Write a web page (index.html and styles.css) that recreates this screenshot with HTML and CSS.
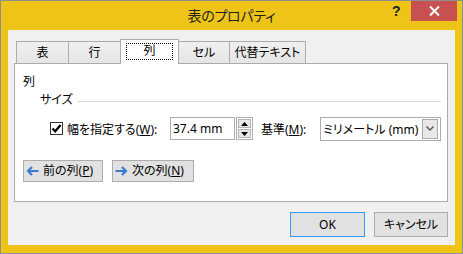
FILE: index.html
```html
<!DOCTYPE html>
<html lang="ja">
<head>
<meta charset="utf-8">
<link rel="stylesheet" href="styles.css">
</head>
<body>
<div class="window">
  <div class="titlebar">
    <div class="title">表のプロパティ</div>
    <div class="help">?</div>
    <div class="close">
      <svg width="11" height="10" viewBox="0 0 11 10"><path d="M1 0.5L10 9.5M10 0.5L1 9.5" stroke="#fff" stroke-width="2"/></svg>
    </div>
  </div>
  <div class="client">
    <div class="tabs">
      <div class="tab t1">表</div>
      <div class="tab t2">行</div>
      <div class="tab sel"><span class="focus">列</span></div>
      <div class="tab t4">セル</div>
      <div class="tab t5">代替テキスト</div>
    </div>
    <div class="panel">
      <div class="group-label">列</div>
      <div class="section"><span>サイズ</span><span class="rule"></span></div>
      <div class="row">
        <span class="check"><svg width="11" height="11" viewBox="0 0 11 11"><path d="M1.5 5.5L4.2 8.3L9.6 2" fill="none" stroke="#000" stroke-width="2.2"/></svg></span>
        <span class="lbl-width">幅を指定する(<u>W</u>):</span>
        <span class="input">37.4 mm</span>
        <span class="spin">
          <span class="spin-btn"><svg width="7" height="4" viewBox="0 0 7 4"><path d="M0 4L3.5 0L7 4Z" fill="#000"/></svg></span>
          <span class="spin-btn"><svg width="7" height="4" viewBox="0 0 7 4"><path d="M0 0L3.5 4L7 0Z" fill="#000"/></svg></span>
        </span>
        <span class="lbl-base">基準(<u>M</u>):</span>
        <span class="select">
          <span class="select-text">ミリメートル (mm)</span>
          <span class="drop"><svg width="8" height="5" viewBox="0 0 8 5"><path d="M0.5 0.5L4 4L7.5 0.5" fill="none" stroke="#555" stroke-width="1.4"/></svg></span>
        </span>
      </div>
      <div class="nav">
        <div class="btn prev"><svg class="arrow" width="13" height="10" viewBox="0 0 13 10"><path d="M12.5 5H2M6 1L2 5L6 9" fill="none" stroke="#3b7bcb" stroke-width="2.2"/></svg>前の列(<u>P</u>)</div>
        <div class="btn next"><svg class="arrow" width="13" height="10" viewBox="0 0 13 10"><path d="M0.5 5H11M7 1L11 5L7 9" fill="none" stroke="#3b7bcb" stroke-width="2.2"/></svg>次の列(<u>N</u>)</div>
      </div>
    </div>
    <div class="footer">
      <div class="btn dlg ok">OK</div>
      <div class="btn dlg cancel">キャンセル</div>
    </div>
  </div>
</div>
</body>
</html>
```
FILE: styles.css
```css
html, body {
  margin: 0;
  padding: 0;
}
body {
  font-family: "Noto Sans", "Noto Sans CJK JP", sans-serif;
  font-size: 12px;
  color: #000;
  font-feature-settings: "palt";
}
.window {
  width: 461px;
  height: 252px;
  border: 1px solid #8e8e8e;
  background: #efc418;
  display: flex;
  flex-direction: column;
}
.titlebar {
  height: 29px;
  position: relative;
  display: flex;
  justify-content: center;
}
.title {
  font-size: 14px;
  line-height: 29px;
  color: #222;
  letter-spacing: -0.3px;
}
.help {
  position: absolute;
  left: 391px;
  top: 2px;
  font-family: "Liberation Sans", sans-serif;
  font-weight: bold;
  font-size: 14px;
  line-height: 16px;
  color: #222;
}
.close {
  position: absolute;
  left: 410px;
  top: 0;
  width: 46px;
  height: 20px;
  background: #c75050;
  display: flex;
  align-items: center;
  justify-content: center;
}
.client {
  margin-left: 7px;
  width: 434px;
  height: 206px;
  padding: 9px 7px 0 6px;
  background: #f0f0f0;
}
.tabs {
  display: flex;
  align-items: flex-end;
  height: 24px;
  padding-left: 2px;
  position: relative;
  z-index: 1;
}
.tab {
  box-sizing: border-box;
  height: 22px;
  border: 1px solid #acacac;
  border-bottom: none;
  background: linear-gradient(#f0f0f0, #e5e5e5);
  display: flex;
  align-items: center;
  justify-content: center;
  margin-left: -1px;
  line-height: 16px;
  padding-top: 1px;
}
.t1 { width: 53px; margin-left: 0; }
.t2 { width: 53px; }
.t4 { width: 52px; }
.t5 { width: 77px; }
.tab.sel {
  width: 59px;
  height: 25px;
  margin-bottom: -1px;
  background: #fff;
  align-items: flex-start;
  padding-top: 3px;
  position: relative;
  z-index: 2;
}
.focus {
  box-sizing: border-box;
  width: 47px;
  height: 17px;
  outline: 1px dotted #000;
  outline-offset: -1px;
  text-align: center;
  line-height: 16px;
}
.panel {
  box-sizing: border-box;
  height: 139px;
  border: 1px solid #acacac;
  background: #fff;
  padding: 10px 6px 0 8px;
}
.group-label {
  line-height: 16px;
}
.section {
  margin-top: 2px;
  padding-left: 17px;
  display: flex;
  align-items: center;
  line-height: 16px;
}
.rule {
  flex: 1;
  height: 1px;
  background: #d5d5d5;
  margin-left: 5px;
  margin-top: 2px;
}
.row {
  margin-top: 9px;
  height: 23px;
  display: flex;
  align-items: center;
  padding-left: 27px;
}
.check {
  box-sizing: border-box;
  width: 13px;
  height: 13px;
  border: 1px solid #333;
  background: #fff;
  display: flex;
  align-items: center;
  justify-content: center;
}
.lbl-width {
  margin-left: 4px;
  width: 103px;
}
.input {
  box-sizing: border-box;
  width: 65px;
  height: 23px;
  border: 1px solid #abadb3;
  background: #fff;
  padding-left: 2px;
  line-height: 21px;
}
.spin {
  margin-left: 1px;
  width: 17px;
  height: 23px;
  display: flex;
  flex-direction: column;
  gap: 1px;
  box-sizing: border-box;
  border: 1px solid #abadb3;
  background: #fff;
  padding: 1px;
}
.spin-btn {
  flex: 1;
  background: #e8e8e8;
  border: 1px solid #b4b4b4;
  display: flex;
  align-items: center;
  justify-content: center;
}
.lbl-base {
  margin-left: 8px;
  width: 59px;
}
.select {
  box-sizing: border-box;
  width: 121px;
  height: 24px;
  border: 1px solid #acacac;
  background: #fff;
  display: flex;
  align-items: center;
  padding: 0 2px 0 2px;
}
.select-text {
  flex: 1;
  white-space: nowrap;
}
.drop {
  box-sizing: border-box;
  width: 16px;
  height: 20px;
  border: 1px solid #acacac;
  background: #e8e8e8;
  display: flex;
  align-items: center;
  justify-content: center;
}
.nav {
  margin-top: 20px;
  display: flex;
  gap: 9px;
}
.btn {
  box-sizing: border-box;
  height: 22px;
  border: 1px solid #adadad;
  background: #e1e1e1;
  display: flex;
  align-items: center;
  line-height: 16px;
  white-space: nowrap;
}
.prev { width: 80px; padding-left: 2px; }
.next { width: 82px; padding-left: 2px; }
.arrow { margin-right: 4px; }
.footer {
  margin-top: 10px;
  display: flex;
  justify-content: flex-end;
  gap: 9px;
  padding-right: 0;
}
.btn.dlg {
  height: 25px;
  justify-content: center;
}
.ok {
  width: 75px;
  border-color: #3399ff;
}
.cancel {
  width: 74px;
}
```
